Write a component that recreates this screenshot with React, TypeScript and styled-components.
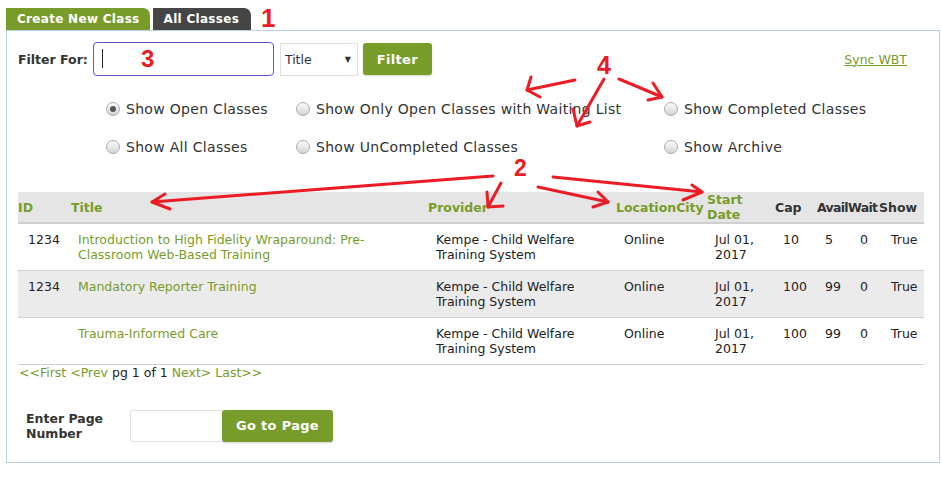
import React from "react";
import styled, { createGlobalStyle } from "styled-components";

const GREEN = "#789c2a";
const RED = "#ec1c24";

const GlobalStyle = createGlobalStyle`
  html, body { margin: 0; padding: 0; background: #fff; }
  body { font-family: "DejaVu Sans", Verdana, sans-serif; color: #222; }
  * { box-sizing: border-box; }
`;

const Page = styled.div`
  position: relative;
  width: 942px;
  height: 489px;
  padding: 8px 2px 0 6px;
`;

const Tabs = styled.div`
  display: flex;
  gap: 3px;
  height: 22px;
`;

const Tab = styled.div<{ $dark?: boolean }>`
  height: 22px;
  line-height: 22px;
  padding: 0 ${(p) => (p.$dark ? "12px" : "10px")} 0 11px;
  background: ${(p) => (p.$dark ? "#454545" : GREEN)};
  color: #fff;
  font-weight: bold;
  font-size: 12px;
  letter-spacing: 0.3px;
  border-radius: 0 7px 0 0;
`;

const Panel = styled.div`
  width: 934px;
  border: 1px solid #b9cfe3;
  padding: 11px 16px 20px 11px;
`;

const FilterRow = styled.div`
  display: flex;
  align-items: center;
  height: 34px;
`;

const Label = styled.label`
  font-weight: bold;
  font-size: 12.5px;
  color: #333;
`;

const FilterLabel = styled(Label)`
  margin-right: 5px;
`;

const InputWrap = styled.div`
  position: relative;
  width: 181px;
  height: 34px;
`;

const TextInput = styled.input`
  width: 100%;
  height: 100%;
  border: 1px solid #6a4fb8;
  border-radius: 4px;
  outline: none;
  padding: 0 8px;
  font: inherit;
`;

const Caret = styled.span`
  position: absolute;
  left: 9px;
  top: 7px;
  width: 1px;
  height: 19px;
  background: #222;
`;

const SelectBox = styled.div`
  display: flex;
  align-items: center;
  width: 78px;
  height: 33px;
  margin-left: 6px;
  border: 1px solid #e0e0e0;
  background: #fff;
  padding: 0 6px 0 4px;
`;

const Select = styled.select`
  appearance: none;
  border: none;
  background: transparent;
  flex: 1;
  font-family: "DejaVu Sans", sans-serif;
  font-size: 12.5px;
  color: #333;
  outline: none;
`;

const SelectArrow = styled.span`
  font-size: 8px;
  color: #333;
`;

const Button = styled.button<{ $w: number; $h: number; $fs: number }>`
  width: ${(p) => p.$w}px;
  height: ${(p) => p.$h}px;
  background: ${GREEN};
  border: none;
  border-radius: 3px;
  box-shadow: 0 1px 2px rgba(0, 0, 0, 0.18);
  color: #fff;
  font-family: "DejaVu Sans", sans-serif;
  font-weight: bold;
  font-size: ${(p) => p.$fs}px;
  letter-spacing: 0.3px;
  padding: 0;
`;

const FilterButton = styled(Button)`
  margin-left: 5px;
`;

const SyncLink = styled.a`
  margin-left: auto;
  margin-right: 16px;
  color: ${GREEN};
  font-size: 12.5px;
  text-decoration: underline;
`;

const RadioGrid = styled.div`
  display: grid;
  grid-template-columns: 190px 368px auto;
  row-gap: 18px;
  margin: 23px 0 0 88px;
`;

const RadioItem = styled.label`
  display: flex;
  align-items: center;
  gap: 6px;
  height: 20px;
  font-size: 14px;
  letter-spacing: 0.3px;
  color: #333;
`;

const Radio = styled.span<{ $on?: boolean }>`
  width: 14px;
  height: 14px;
  border-radius: 50%;
  border: 1px solid #aaa;
  background: linear-gradient(#fbfbfb, #d4d4d4);
  display: flex;
  align-items: center;
  justify-content: center;
  &::after {
    content: "";
    width: 6px;
    height: 6px;
    border-radius: 50%;
    background: ${(p) => (p.$on ? "#555" : "transparent")};
  }
`;

const Table = styled.table`
  width: 906px;
  margin-top: 35px;
  border-collapse: collapse;
  table-layout: fixed;
`;

const HeadRow = styled.tr`
  background: #e5e5e5;
  height: 28px;
  border-bottom: 2px solid #cfcfcf;
`;

const Th = styled.th<{ $sort?: boolean; $wrap?: boolean; $tight?: boolean; $pl?: number }>`
  padding: 0 0 0 ${(p) => p.$pl ?? 0}px;
  text-align: left;
  font-size: 12.5px;
  font-weight: bold;
  line-height: 15px;
  letter-spacing: ${(p) => (p.$tight ? "-0.7px" : "0")};
  color: ${(p) => (p.$sort ? GREEN : "#333")};
  white-space: ${(p) => (p.$wrap ? "normal" : "nowrap")};
  overflow: visible;
`;

const Row = styled.tr<{ $alt?: boolean }>`
  background: ${(p) => (p.$alt ? "#ebebeb" : "#fff")};
  height: 47px;
  border-bottom: 1px solid #cfcfcf;
`;

const Td = styled.td<{ $align?: string; $pl?: number }>`
  vertical-align: top;
  padding: 8px 8px 0 ${(p) => p.$pl ?? 8}px;
  font-size: 12.5px;
  line-height: 15px;
  text-align: ${(p) => p.$align ?? "left"};
  color: #222;
`;

const TitleLink = styled.a`
  color: ${GREEN};
  text-decoration: none;
`;

const Pager = styled.div`
  margin: 0 0 0 1px;
  font-size: 12.5px;
  line-height: 15px;
  color: #222;
`;

const PagerLink = styled.a`
  color: ${GREEN};
  text-decoration: none;
`;

const GotoRow = styled.div`
  display: flex;
  align-items: center;
  margin: 30px 0 0 8px;
`;

const GotoLabel = styled(Label)`
  width: 80px;
  margin-right: 24px;
  line-height: 15px;
`;

const PageInput = styled.input`
  width: 92px;
  height: 32px;
  border: 1px solid #e2e2e2;
  border-right: none;
  border-radius: 3px 0 0 3px;
  outline: none;
`;

const Overlay = styled.svg`
  position: absolute;
  left: 0;
  top: 0;
  pointer-events: none;
`;

type Arrow = { from: [number, number]; to: [number, number]; h1: [number, number]; h2: [number, number] };

const arrows: Arrow[] = [
  { from: [575, 80], to: [527, 90], h1: [531, 77], h2: [540, 97] },
  { from: [604, 79], to: [577, 126], h1: [573, 109], h2: [590, 122] },
  { from: [619, 79], to: [662, 97], h1: [653, 83], h2: [648, 100] },
  { from: [493, 176], to: [152, 202], h1: [165, 194], h2: [170, 209] },
  { from: [501, 183], to: [488, 207], h1: [503, 206], h2: [487, 192] },
  { from: [538, 187], to: [608, 202], h1: [598, 192], h2: [593, 207] },
  { from: [553, 177], to: [702, 192], h1: [692, 185], h2: [683, 200] },
];

const marks = [
  { t: "1", x: 261, y: 27, s: 26 },
  { t: "3", x: 141, y: 67, s: 24 },
  { t: "4", x: 597, y: 74, s: 25 },
  { t: "2", x: 514, y: 176, s: 23 },
];

const rows = [
  { id: "1234", title: "Introduction to High Fidelity Wraparound: Pre-Classroom Web-Based Training", cap: "10", avail: "5" },
  { id: "1234", title: "Mandatory Reporter Training", cap: "100", avail: "99" },
  { id: "", title: "Trauma-Informed Care", cap: "100", avail: "99" },
];

export default function App() {
  return (
    <Page>
      <GlobalStyle />
      <Tabs>
        <Tab>Create New Class</Tab>
        <Tab $dark>All Classes</Tab>
      </Tabs>
      <Panel>
        <FilterRow>
          <FilterLabel>Filter For:</FilterLabel>
          <InputWrap>
            <TextInput type="text" />
            <Caret />
          </InputWrap>
          <SelectBox>
            <Select defaultValue="Title">
              <option>Title</option>
            </Select>
            <SelectArrow>▼</SelectArrow>
          </SelectBox>
          <FilterButton $w={69} $h={32} $fs={13}>Filter</FilterButton>
          <SyncLink href="#">Sync WBT</SyncLink>
        </FilterRow>

        <RadioGrid>
          <RadioItem><Radio $on />Show Open Classes</RadioItem>
          <RadioItem><Radio />Show Only Open Classes with Waiting List</RadioItem>
          <RadioItem><Radio />Show Completed Classes</RadioItem>
          <RadioItem><Radio />Show All Classes</RadioItem>
          <RadioItem><Radio />Show UnCompleted Classes</RadioItem>
          <RadioItem><Radio />Show Archive</RadioItem>
        </RadioGrid>

        <Table>
          <colgroup>
            <col style={{ width: 52 }} />
            <col style={{ width: 358 }} />
            <col style={{ width: 188 }} />
            <col style={{ width: 91 }} />
            <col style={{ width: 68 }} />
            <col style={{ width: 42 }} />
            <col style={{ width: 31 }} />
            <col style={{ width: 31 }} />
            <col style={{ width: 45 }} />
          </colgroup>
          <thead>
            <HeadRow>
              <Th $sort>ID</Th>
              <Th $sort $pl={1}>Title</Th>
              <Th $sort>Provider</Th>
              <Th $sort>LocationCity</Th>
              <Th $sort $wrap>Start Date</Th>
              <Th>Cap</Th>
              <Th $tight>Avail</Th>
              <Th $tight>Wait</Th>
              <Th>Show</Th>
            </HeadRow>
          </thead>
          <tbody>
            {rows.map((r, i) => (
              <Row key={i} $alt={i === 1}>
                <Td $align="center">{r.id}</Td>
                <Td><TitleLink href="#">{r.title}</TitleLink></Td>
                <Td>Kempe - Child Welfare Training System</Td>
                <Td>Online</Td>
                <Td>Jul 01, 2017</Td>
                <Td>{r.cap}</Td>
                <Td>{r.avail}</Td>
                <Td $pl={12}>0</Td>
                <Td $pl={12}>True</Td>
              </Row>
            ))}
          </tbody>
        </Table>

        <Pager>
          <PagerLink href="#">&lt;&lt;First</PagerLink> <PagerLink href="#">&lt;Prev</PagerLink> pg 1 of 1{" "}
          <PagerLink href="#">Next&gt;</PagerLink> <PagerLink href="#">Last&gt;&gt;</PagerLink>
        </Pager>

        <GotoRow>
          <GotoLabel>Enter Page Number</GotoLabel>
          <PageInput type="text" />
          <Button $w={111} $h={32} $fs={13}>Go to Page</Button>
        </GotoRow>
      </Panel>

      <Overlay width={942} height={489} viewBox="0 0 942 489">
        <g stroke={RED} strokeWidth={3} strokeLinecap="round" strokeLinejoin="round" fill="none">
          {arrows.map((a, i) => (
            <g key={i}>
              <line x1={a.from[0]} y1={a.from[1]} x2={a.to[0]} y2={a.to[1]} />
              <polyline points={`${a.h1[0]},${a.h1[1]} ${a.to[0]},${a.to[1]} ${a.h2[0]},${a.h2[1]}`} />
            </g>
          ))}
        </g>
        {marks.map((m) => (
          <text key={m.t} x={m.x} y={m.y} fill={RED} fontFamily="Liberation Sans, Arial, sans-serif" fontWeight="bold" fontSize={m.s}>
            {m.t}
          </text>
        ))}
      </Overlay>
    </Page>
  );
}
